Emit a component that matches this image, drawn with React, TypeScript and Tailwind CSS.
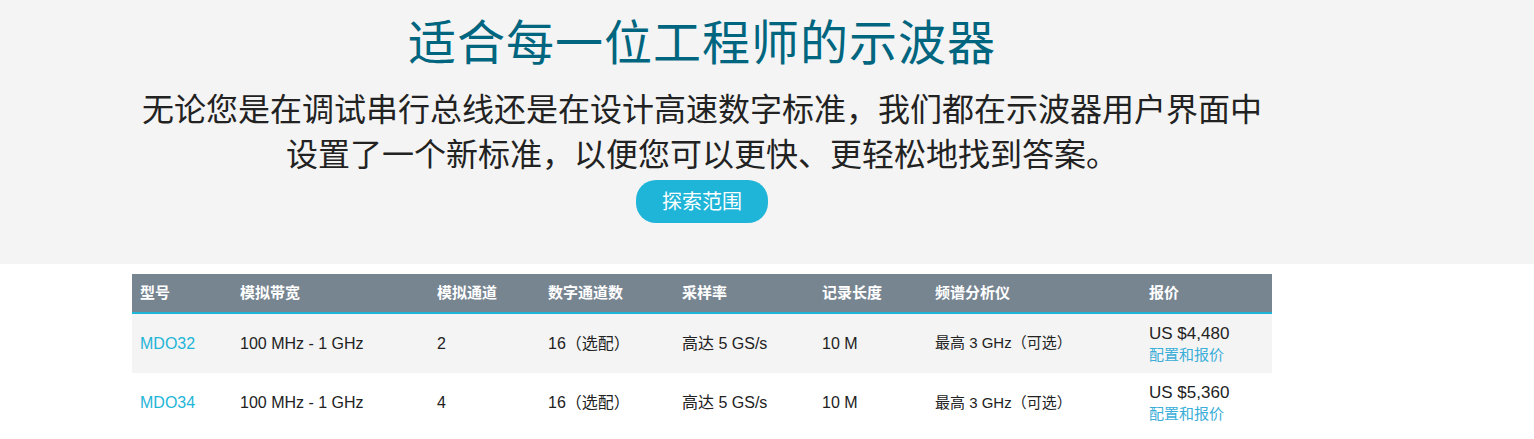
const rows = [
  { model: "MDO32", bw: "100 MHz - 1 GHz", ch: "2", dig: "16（选配）", rate: "高达 5 GS/s", rec: "10 M", sa: "最高 3 GHz（可选）", price: "US $4,480" },
  { model: "MDO34", bw: "100 MHz - 1 GHz", ch: "4", dig: "16（选配）", rate: "高达 5 GS/s", rec: "10 M", sa: "最高 3 GHz（可选）", price: "US $5,360" },
];

const heads = ["型号", "模拟带宽", "模拟通道", "数字通道数", "采样率", "记录长度", "频谱分析仪", "报价"];
const widths = ["w-[100px]", "w-[197px]", "w-[111px]", "w-[134px]", "w-[140px]", "w-[113px]", "w-[214px]", "w-[131px]"];

export default function App() {
  return (
    <div className="w-[1534px] min-h-[439px] bg-white font-['Liberation_Sans','Noto_Sans_CJK_SC',sans-serif]">
      <section className="bg-[#f4f4f4] h-[264px] pt-[14px]">
        <div className="ml-[132px] w-[1140px] flex flex-col items-center">
          <h1 className="text-[48px] leading-[60px] text-[#00667f] font-normal tracking-[1px]">适合每一位工程师的示波器</h1>
          <p className="mt-[14px] text-[32px] leading-[45px] text-[#222] text-center w-[1140px]">
            无论您是在调试串行总线还是在设计高速数字标准，我们都在示波器用户界面中
            <br />
            设置了一个新标准，以便您可以更快、更轻松地找到答案。
          </p>
          <button className="mt-[2px] h-[43px] w-[132px] rounded-[20px] bg-[#1eb5d8] text-white text-[20px]">探索范围</button>
        </div>
      </section>
      <table className="ml-[132px] mt-[10px] w-[1140px] border-collapse text-left table-fixed">
        <thead>
          <tr className="bg-[#778591] h-[39px] border-b-2 border-[#1eb5d8]">
            {heads.map((h, i) => (
              <th key={h} className={`${widths[i]} px-[8px] text-[15px] font-bold text-white`}>{h}</th>
            ))}
          </tr>
        </thead>
        <tbody className="text-[16px] text-[#222]">
          {rows.map((r, i) => (
            <tr key={r.model} className={i === 0 ? "bg-[#f4f4f4] h-[60px]" : "bg-white h-[60px]"}>
              <td className="px-[8px] text-[#1eb5d8]">{r.model}</td>
              <td className="px-[8px]">{r.bw}</td>
              <td className="px-[8px]">{r.ch}</td>
              <td className="px-[8px]">{r.dig}</td>
              <td className="px-[8px]">{r.rate}</td>
              <td className="px-[8px]">{r.rec}</td>
              <td className="px-[8px] text-[15px]">{r.sa}</td>
              <td className="px-[8px]">
                <div className="leading-[21px] text-[17px]">{r.price}</div>
                <div className="leading-[21px] text-[15px] text-[#3aaed8]">配置和报价</div>
              </td>
            </tr>
          ))}
        </tbody>
      </table>
    </div>
  );
}
